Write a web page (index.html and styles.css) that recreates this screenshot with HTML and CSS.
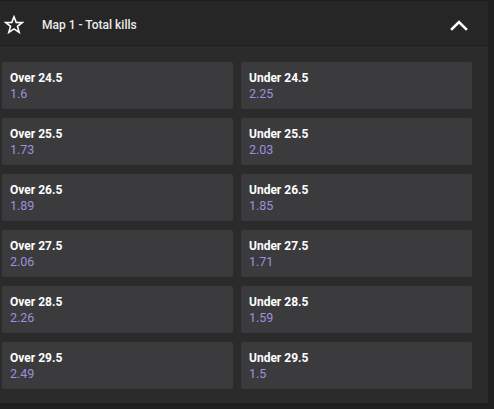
FILE: index.html
```html
<!DOCTYPE html>
<html>
<head>
<meta charset="utf-8">
<link rel="stylesheet" href="styles.css">
</head>
<body>
<div class="page">
  <div class="market">
    <div class="header">
      <svg class="star" width="20" height="20" viewBox="0 0 20 20"><path d="M10 1.8 L12.2 7.4 L18.2 7.6 L13.5 11.4 L15.2 17.3 L10 13.9 L4.8 17.3 L6.5 11.4 L1.8 7.6 L7.8 7.4 Z" fill="none" stroke="#ffffff" stroke-width="1.6" stroke-linejoin="miter"/></svg>
      <span class="title">Map 1 - Total kills</span>
      <svg class="chevron" width="18" height="12" viewBox="0 0 18 12"><path d="M2 10 L9 3 L16 10" fill="none" stroke="#ffffff" stroke-width="2.6" stroke-linecap="square"/></svg>
    </div>
    <div class="grid">
      <div class="card"><div class="label">Over 24.5</div><div class="odds">1.6</div></div>
      <div class="card"><div class="label">Under 24.5</div><div class="odds">2.25</div></div>
      <div class="card"><div class="label">Over 25.5</div><div class="odds">1.73</div></div>
      <div class="card"><div class="label">Under 25.5</div><div class="odds">2.03</div></div>
      <div class="card"><div class="label">Over 26.5</div><div class="odds">1.89</div></div>
      <div class="card"><div class="label">Under 26.5</div><div class="odds">1.85</div></div>
      <div class="card"><div class="label">Over 27.5</div><div class="odds">2.06</div></div>
      <div class="card"><div class="label">Under 27.5</div><div class="odds">1.71</div></div>
      <div class="card"><div class="label">Over 28.5</div><div class="odds">2.26</div></div>
      <div class="card"><div class="label">Under 28.5</div><div class="odds">1.59</div></div>
      <div class="card"><div class="label">Over 29.5</div><div class="odds">2.49</div></div>
      <div class="card"><div class="label">Under 29.5</div><div class="odds">1.5</div></div>
    </div>
  </div>
  <div class="side"></div>
</div>
</body>
</html>
```
FILE: styles.css
```css
html, body {
  margin: 0;
  padding: 0;
  background: #1f1f1f;
}
body {
  font-family: Roboto, "Liberation Sans", Arial, sans-serif;
  width: 494px;
  height: 409px;
  overflow: hidden;
}
.page {
  display: flex;
  height: 409px;
}
.market {
  width: 488px;
  height: 403px;
  background: #2b2b2b;
  border-bottom: 6px solid #1f1f1f;
}
.side {
  flex: 1;
  background: #1f1f1f;
}
.header {
  display: flex;
  align-items: center;
  box-sizing: border-box;
  height: 46px;
  padding: 3px 20px 0 4px;
  background: #262626;
  border-top: 1px solid #1c1c1c;
  border-bottom: 1px solid #1e1e1e;
}
.star {
  display: block;
  flex: none;
}
.title {
  margin-left: 18px;
  font-size: 12px;
  font-weight: 500;
  color: #ececec;
  flex: 1;
}
.chevron {
  display: block;
  flex: none;
}
.grid {
  display: grid;
  grid-template-columns: 231px 231px;
  column-gap: 8px;
  row-gap: 9px;
  padding: 16px 16px 0 2px;
}
.card {
  background: #3b3b3d;
  border-radius: 2px;
  height: 47px;
  box-sizing: border-box;
  padding: 8px 8px 7px 8px;
}
.label {
  font-size: 12px;
  line-height: 16px;
  font-weight: 700;
  color: #ffffff;
}
.odds {
  font-size: 12.5px;
  line-height: 16px;
  color: #9d90dc;
}
```
